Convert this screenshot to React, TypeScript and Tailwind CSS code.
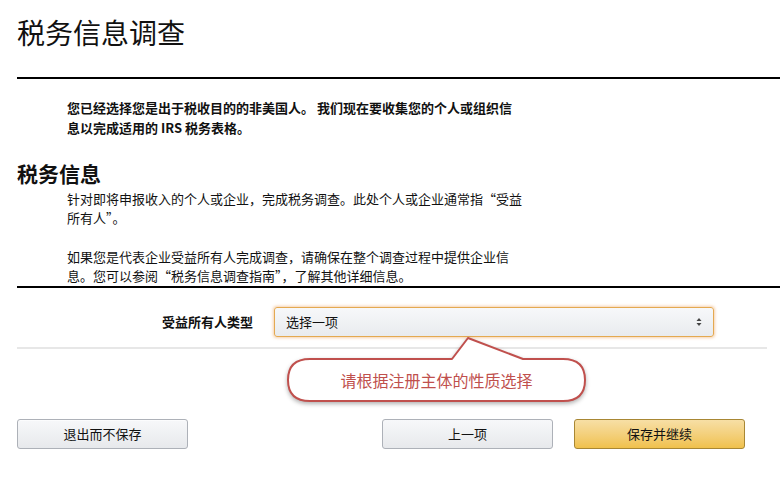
import React from "react";

const Callout = () => {
  return (
    <div className="absolute left-[280px] top-[330px] w-[315px] h-[80px] pointer-events-none">
      <svg
        className="absolute inset-0 drop-shadow-[0_2px_2px_rgba(0,0,0,0.3)]"
        width="315"
        height="80"
        viewBox="0 0 315 80"
      >
        <path
          d="M30 29 L172 29 L188 8 L243 29 L283 29 Q305 29 305 50 Q305 71 283 71 L30 71 Q8 71 8 50 Q8 29 30 29 Z"
          fill="#ffffff"
          stroke="#c0504d"
          strokeWidth="2"
          strokeLinejoin="round"
        />
      </svg>
      <div className="absolute left-[8px] top-[29px] w-[297px] h-[42px] flex items-center justify-center">
        <span className="text-[16px] leading-[20px] text-[#c0504d]">
          请根据注册主体的性质选择
        </span>
      </div>
    </div>
  );
};

const App = () => {
  return (
    <div className="relative w-[780px] h-[500px] bg-white overflow-hidden text-[#111] font-['Noto_Sans_CJK_SC','Noto_Sans',sans-serif]">
      <h1 className="ml-[17px] mt-[14px] text-[28px] leading-[36px] font-normal">
        税务信息调查
      </h1>
      <div className="ml-[17px] mt-[27px] h-[2px] bg-black" />

      <p className="ml-[67px] mt-[19px] text-[13px] leading-[20px] font-bold">
        您已经选择您是出于税收目的的非美国人。 我们现在要收集您的个人或组织信
        <br />
        息以完成适用的 IRS 税务表格。
      </p>

      <h2 className="ml-[17px] mt-[21px] text-[21px] leading-[28px] font-bold">
        税务信息
      </h2>
      <div className="ml-[67px] mt-[2px] text-[13px] leading-[19px]">
        <p>
          针对即将申报收入的个人或企业，完成税务调查。此处个人或企业通常指“受益
          <br />
          所有人”。
        </p>
        <p className="mt-[20px]">
          如果您是代表企业受益所有人完成调查，请确保在整个调查过程中提供企业信
          <br />
          息。您可以参阅“税务信息调查指南”，了解其他详细信息。
        </p>
      </div>
      <div className="ml-[17px] mt-[1px] h-[2px] bg-black" />

      <div className="mt-[19px] flex items-center">
        <label className="w-[253px] text-right text-[13px] leading-[20px] font-bold">
          受益所有人类型
        </label>
        <div className="ml-[21px] w-[440px] h-[30px] flex items-center justify-between px-[11px] rounded-[3px] border border-[#e4a951] bg-gradient-to-b from-[#f7f8fa] to-[#e9ebee] shadow-[0_0_3px_1px_rgba(228,121,17,0.35)]">
          <span className="text-[13px]">选择一项</span>
          <svg width="6" height="10" viewBox="0 0 6 10">
            <path d="M3 1 L5.5 4 L0.5 4 Z" fill="#444" />
            <path d="M3 9 L5.5 6 L0.5 6 Z" fill="#444" />
          </svg>
        </div>
      </div>
      <div className="ml-[17px] mr-[13px] mt-[10px] h-[2px] bg-[#e7e7e7]" />

      <div className="mt-[70px] ml-[17px] mr-[35px] flex items-center">
        <button className="w-[171px] h-[30px] rounded-[3px] border border-[#adb1b8] bg-gradient-to-b from-[#f7f8fa] to-[#e7e9ec] text-[13px] shadow-[0_1px_0_rgba(255,255,255,0.6)_inset]">
          退出而不保存
        </button>
        <div className="ml-auto flex gap-[21px]">
          <button className="w-[171px] h-[30px] rounded-[3px] border border-[#adb1b8] bg-gradient-to-b from-[#f7f8fa] to-[#e7e9ec] text-[13px]">
            上一项
          </button>
          <button className="w-[171px] h-[30px] rounded-[3px] border border-[#a88734] bg-gradient-to-b from-[#f7dfa5] to-[#f0c14b] text-[13px]">
            保存并继续
          </button>
        </div>
      </div>

      <Callout />
    </div>
  );
};

export default App;
